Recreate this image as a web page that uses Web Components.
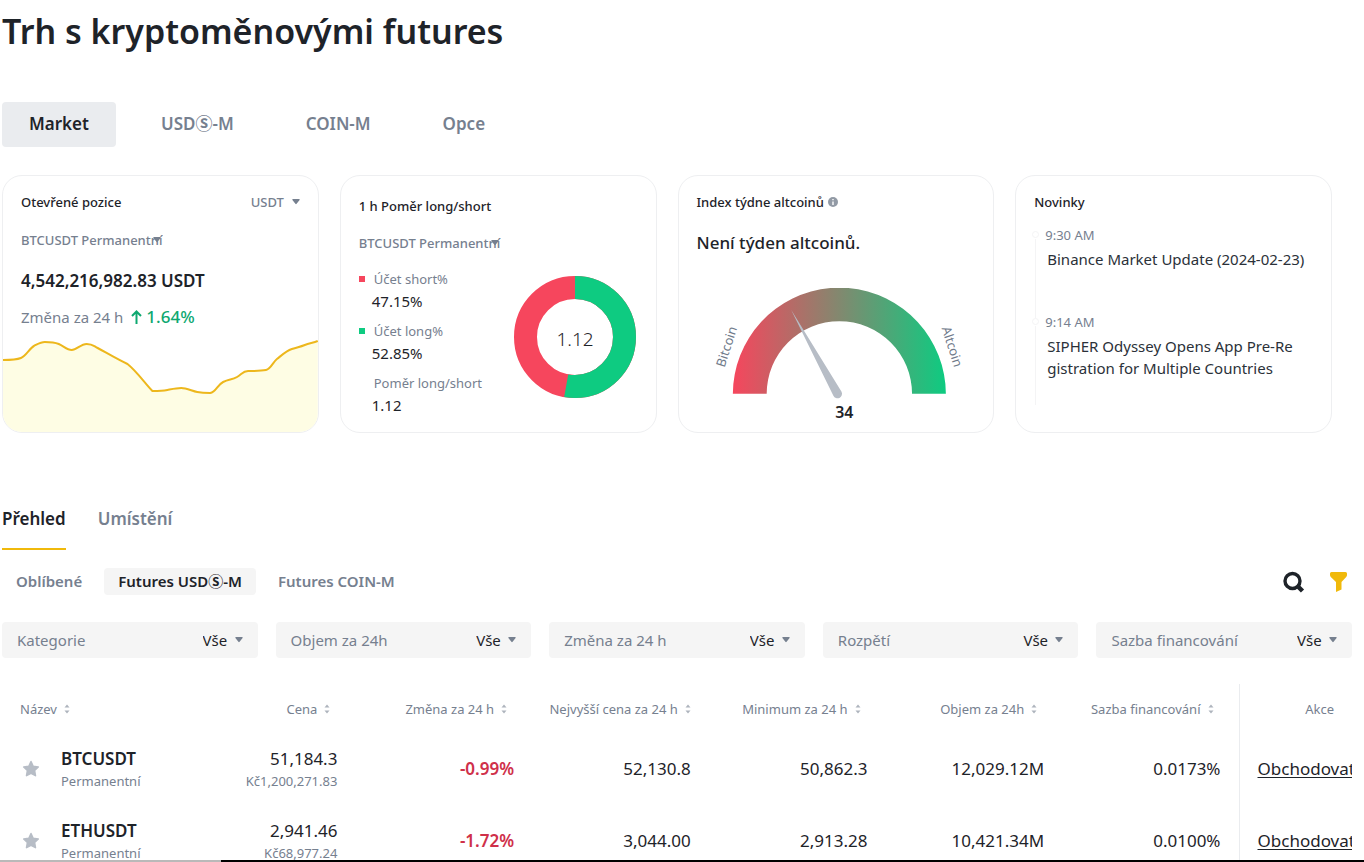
<!DOCTYPE html>
<html lang="cs">
<head>
<meta charset="utf-8">
<meta name="viewport" content="width=device-width, initial-scale=1">
<title>Trh s kryptoměnovými futures</title>
<style>
  html { scrollbar-width: none; }
  body { margin: 0; background: #fff; }
</style>
</head>
<body>
<futures-page></futures-page>

<script>
const BASE = `
  *, *::before, *::after { box-sizing: border-box; }
  :host { display: block; }
  :host([hidden]) { display: none; }
  button, select { font: inherit; color: inherit; background: none; border: 0; margin: 0; padding: 0; cursor: pointer; }
  select { appearance: none; -webkit-appearance: none; }
  svg { display: block; }
`;
const define = (name, css, html, setup) => {
  const template = document.createElement('template');
  template.innerHTML = `<style>${BASE}${css}</style>${html}`;
  customElements.define(name, class extends HTMLElement {
    connectedCallback() {
      if (this.shadowRoot) return;
      this.attachShadow({ mode: 'open' }).append(template.content.cloneNode(true));
      if (setup) setup(this, this.shadowRoot);
    }
  });
};

/* Row of tabs; attribute "kind" picks the look: pill, line or chip. */
define('tab-bar', `
  div { display: flex; }
  button { color: var(--muted); font-weight: 600; white-space: nowrap; }
  button[aria-selected=true] { color: var(--ink); }
  :host([kind=pill]) div { gap: 18px; }
  :host([kind=pill]) button { padding: 10px 27px 11px; line-height: 24px; font-size: 17px; border-radius: 4px; }
  :host([kind=pill]) button[aria-selected=true] { background: #eaecef; }
  :host([kind=line]) div { gap: 32px; }
  :host([kind=line]) button { padding-bottom: 17px; line-height: 24px; font-size: 17px; border-bottom: 2px solid transparent; }
  :host([kind=line]) button[aria-selected=true] { border-color: var(--gold); }
  :host([kind=chip]) div { gap: 8px; }
  :host([kind=chip]) button { padding: 3px 14px 4px; line-height: 20px; font-size: 15px; border-radius: 4px; }
  :host([kind=chip]) button[aria-selected=true] { background: var(--fill); }
`, `<div role="tablist"></div>`, (host, root) => {
  const list = root.querySelector('div');
  host.getAttribute('items').split('|').forEach((text, i) => {
    const b = document.createElement('button');
    b.type = 'button';
    b.setAttribute('role', 'tab');
    b.textContent = text;
    b.setAttribute('aria-selected', String(i === Number(host.getAttribute('selected') || 0)));
    b.onclick = () => list.querySelectorAll('button').forEach(o => o.setAttribute('aria-selected', String(o === b)));
    list.append(b);
  });
});

/* Drop-down with a small caret; "overlap" lets the caret lie over the text's end. */
define('pick-list', `
  :host { display: inline-block; }
  label { display: flex; align-items: center; justify-content: space-between; position: relative; }
  span:empty { display: none; }
  span { color: var(--muted); white-space: nowrap; }
  .box { position: relative; display: block; }
  select { display: block; padding-right: 15px; line-height: 20px; height: 20px; }
  svg { position: absolute; right: 0; top: 7px; width: 8px; height: 6px; fill: #76808f; pointer-events: none; }
  :host([overlap]) select { padding-right: 0; }
  :host([overlap]) svg { right: 2px; }
  :host([filter]) { display: block; background: var(--fill); border-radius: 4px; padding: 8px 15px; font-size: 15px; }
  :host([filter]) select { color: var(--ink); }
`, `<label><span></span><div class="box"><select><option></option></select>
    <svg viewBox="0 0 8 6" aria-hidden="true"><path d="M1 0h6q1.200 0 .6 1.100L4.600 4.800q-.6.8-1.200 0L.4 1.100Q-.2 0 1 0z"/></svg></div></label>`,
(host, root) => {
  root.querySelector('span').textContent = host.getAttribute('label') || '';
  root.querySelector('option').textContent = host.getAttribute('value');
  if (host.hasAttribute('name')) root.querySelector('select').setAttribute('aria-label', host.getAttribute('name'));
});

/* White rounded card with a heading row. */
define('market-card', `
  :host { position: relative; overflow: hidden; border: 1px solid #eeeff1; border-radius: 20px; padding: 16px 18px 8px; min-height: 258px; min-width: 0; font-size: 13px; line-height: 20px; }
  :host([low]) { padding-top: 20px; }
  header { display: flex; justify-content: space-between; }
  h2 { margin: 0; font-size: 13px; font-weight: 500; display: flex; align-items: center; gap: 4px; color: var(--ink); }
`, `<header><h2><slot name="title"></slot></h2><slot name="action"></slot></header><slot></slot>`);

define('open-interest', `
  pick-list { margin-top: 18px; color: var(--muted); font-weight: 500; vertical-align: top; }
  strong { display: block; margin-top: 19px; font-size: 17px; line-height: 24px; font-weight: 600; color: var(--ink); }
  p { margin: 14px 0 0; font-size: 15px; display: flex; align-items: center; gap: 8px; color: var(--muted); }
  b { display: flex; align-items: center; gap: 4px; font-size: 17px; font-weight: 500; color: #0ea870; }
  .chart { position: absolute; left: 0; bottom: 0; width: 100%; height: 98px; }
`, `<pick-list overlap name="Kontrakt" value="BTCUSDT Permanentní"></pick-list>
  <strong>4,542,216,982.83 USDT</strong>
  <p>Změna za 24 h <b><svg width="11" height="14" viewBox="0 0 11 14" fill="none" stroke="currentColor" stroke-width="2"><path d="M5.500 14V1.500M1 6l4.500-4.500L10 6"/></svg>1.64%</b></p>
  <svg class="chart" viewBox="0 335 316 98" preserveAspectRatio="none" aria-hidden="true">
    <path fill="#fefde4" d="M0 361C8 361 13 361 18 359S27 349 31 347S38 343 42 343S51 343 56 345S64 351 69 351S78 345 84 345S91 347 95 349C106 355 116 361 125 365C135 373 142 384 150 392C156 392 160 392 165 391S174 389 179 389S190 392 195 393S204 394 208 394C214 393 215 386 221 383S230 381 235 378S241 372 246 372S259 372 264 371S271 363 275 360S284 352 290 350S298 348 303 346S312 344 316 342V433H0z"/>
    <path fill="none" stroke="#edb71c" stroke-width="2" d="M0 361C8 361 13 361 18 359S27 349 31 347S38 343 42 343S51 343 56 345S64 351 69 351S78 345 84 345S91 347 95 349C106 355 116 361 125 365C135 373 142 384 150 392C156 392 160 392 165 391S174 389 179 389S190 392 195 393S204 394 208 394C214 393 215 386 221 383S230 381 235 378S241 372 246 372S259 372 264 371S271 363 275 360S284 352 290 350S298 348 303 346S312 344 316 342"/>
  </svg>`);

define('long-short', `
  pick-list { margin-top: 17px; color: var(--muted); font-weight: 500; vertical-align: top; }
  .body { display: flex; justify-content: space-between; align-items: flex-start; margin-top: 16px; }
  dl { margin: 0; display: grid; gap: 8px; }
  dt { color: var(--muted); display: flex; align-items: center; gap: 9px; white-space: nowrap; }
  dt::before { content: ""; width: 6px; height: 6px; background: var(--dot, transparent); }
  dd { margin: 0 0 0 13px; font-size: 15px; line-height: 24px; color: var(--ink); }
  figure { margin: 5px 0 0; flex: none; }
`, `<pick-list overlap name="Kontrakt" value="BTCUSDT Permanentní"></pick-list>
  <div class="body"><dl>
    <div><dt style="--dot:#f6465d">Účet short%</dt><dd>47.15%</dd></div>
    <div><dt style="--dot:#0ecb81">Účet long%</dt><dd>52.85%</dd></div>
    <div><dt>Poměr long/short</dt><dd>1.12</dd></div>
  </dl>
  <figure><svg width="126" height="126" viewBox="0 0 126 126">
    <g fill="none" stroke-width="23" transform="rotate(-90 63 63)">
      <circle cx="63" cy="63" r="49.500" stroke="#f6465d"/>
      <circle cx="63" cy="63" r="49.500" stroke="#0ecb81" pathLength="100" stroke-dasharray="52.850 47.150"/>
    </g>
    <text x="63" y="72" text-anchor="middle" font-size="19" fill="#1e2329" font-weight="300">1.12</text>
  </svg></figure></div>`);

define('altcoin-index', `
  strong { display: block; margin-top: 19px; font-size: 17px; line-height: 24px; font-weight: 500; color: var(--ink); }
  svg { width: 100%; height: 142px; margin-top: 25px; }
`, `<strong>Není týden altcoinů.</strong>
  <svg viewBox="696 280 280 142">
    <defs><linearGradient id="g" x1="0" x2="1"><stop offset="0" stop-color="#f6465d"/><stop offset="1" stop-color="#0ecb81"/></linearGradient></defs>
    <path fill="url(#g)" d="M732 394A107 107 0 0 1 830 287.800H848A107 107 0 0 1 946 394H912A73 73 0 0 0 766 394z"/>
    <path fill="#b7bdc6" d="M790.500 309.500L841.200 392A4.500 4.500 0 1 1 833 396z"/>
    <g font-size="13" text-anchor="middle" fill="#707a8a">
      <text transform="translate(730 348) rotate(-72)">Bitcoin</text>
      <text transform="translate(948 348) rotate(72)">Altcoin</text>
    </g>
    <text x="844" y="418" text-anchor="middle" font-size="16" font-weight="600" fill="#1e2329">34</text>
  </svg>`);

define('news-list', `
  ol { list-style: none; margin: 13px 0 0; padding: 0; }
  li { min-height: 87px; padding-left: 11px; position: relative; }
  li::before { content: ""; position: absolute; left: 1px; top: 14px; bottom: -6px; border-left: 1px solid #f4f4f5; }
  li::after { content: ""; position: absolute; left: -2px; top: 6px; width: 7px; height: 7px; border: 1px solid #f4f4f5; border-radius: 50%; }
  time { display: block; color: var(--muted); }
  a { display: block; margin: 3px 0 0 2px; font-size: 15px; line-height: 22px; color: #2b3139; text-decoration: none; }
`, `<ol><li><time>9:30 AM</time><a href="#n1">Binance Market Update (2024-02-23)</a></li>
  <li><time>9:14 AM</time><a href="#n2">SIPHER Odyssey Opens App Pre-Re<wbr>gistration for Multiple Countries</a></li></ol>`);

define('futures-table', `
  table { width: 100%; border-collapse: collapse; table-layout: fixed; }
  .last { width: 113px; }
  th { height: 49px; padding: 0 25px 0 0; text-align: right; font-size: 13px; font-weight: 400; color: var(--muted); white-space: nowrap; }
  th button { display: inline-flex; align-items: center; gap: 7px; }
  th:first-child { text-align: left; padding-left: 18px; }
  th:nth-child(4) { padding-right: 18px; }
  td { height: 72px; padding: 0 18px 0 0; text-align: right; font-size: 17px; color: var(--ink); white-space: nowrap; }
  th:last-child, td:last-child { border-left: 1px solid #eaecef; padding: 0 18px; }
  td:last-child { text-align: left; }
  td:first-child { padding: 0 0 0 20px; text-align: left; }
  .pair { display: flex; align-items: center; gap: 21px; font-weight: 600; }
  .down { color: #cf304a; font-weight: 600; }
  .two { display: block; line-height: 24px; }
  small { display: block; font-size: 13px; line-height: 20px; font-weight: 400; color: var(--muted); }
  a { color: inherit; text-underline-offset: 2px; text-decoration-thickness: 1px; }
  .sort { fill: #aeb4bd; }
`, `<table><colgroup><col span="7"><col class="last"></colgroup><thead><tr></tr></thead><tbody></tbody></table>`,
(host, root) => {
  const sort = '<svg class="sort" width="6" height="10" viewBox="0 0 6 10" aria-hidden="true"><path d="M3 .5L5.500 3.500H.5zM3 9.500L.5 6.500H5.500z"/></svg>';
  const star = '<svg width="18" height="18" viewBox="0 0 18 18" fill="#b7bdc6" stroke="#b7bdc6" stroke-linejoin="round" stroke-width="1.500"><path d="M9 1.500l2.200 4.700 5.100.7-3.700 3.600.9 5.200L9 13.300l-4.500 2.400.9-5.200L1.700 6.900l5.100-.7z"/></svg>';
  root.querySelector('thead tr').innerHTML =
    ['Název', 'Cena', 'Změna za 24 h', 'Nejvyšší cena za 24 h', 'Minimum za 24 h', 'Objem za 24h', 'Sazba financování']
      .map(t => `<th scope="col"><button type="button">${t} ${sort}</button></th>`).join('') + '<th scope="col">Akce</th>';
  root.querySelector('tbody').innerHTML = [
    ['BTCUSDT', '51,184.3', 'Kč1,200,271.83', '-0.99%', '52,130.8', '50,862.3', '12,029.12M', '0.0173%'],
    ['ETHUSDT', '2,941.46', 'Kč68,977.24', '-1.72%', '3,044.00', '2,913.28', '10,421.34M', '0.0100%']
  ].map(([n, p, k, c, ...rest]) => `<tr>
    <td><div class="pair"><button type="button" aria-label="Oblíbené">${star}</button><span class="two">${n}<small>Permanentní</small></span></div></td>
    <td><span class="two">${p}<small>${k}</small></span></td><td class="down">${c}</td>
    ${rest.map(v => `<td>${v}</td>`).join('')}<td><a href="#${n}">Obchodovat</a></td></tr>`).join('');
});

define('futures-page', `
  :host {
    --ink: #1e2329; --muted: #76808f; --gold: #f0b90b; --fill: #f5f5f5;
    font-family: "Noto Sans", "Noto Sans CJK JP", sans-serif; color: var(--ink); font-size: 15px; line-height: 20px;
  }
  main { margin: 0 12px 0 2px; padding-top: 9px; overflow: hidden; }
  h1 { margin: 0; font-size: 34px; line-height: 44px; font-weight: 600; }
  .markets { margin-top: 49px; }
  .cards { display: grid; grid-template-columns: repeat(4, minmax(0, 1fr)); gap: 21px; margin: 28px 20px 0 0; }
  .sections { margin-top: 74px; }
  .bar { display: flex; align-items: center; justify-content: space-between; margin-top: 18px; }
  .tools { display: flex; align-items: center; gap: 25px; padding-right: 5px; height: 27px; }
  .tools button { display: block; }
  .filters { display: grid; grid-template-columns: repeat(5, minmax(0, 1fr)); gap: 18px; margin: 27px 0 26px; }
  .unit { color: var(--muted); font-weight: 500; }
  .edge { position: fixed; inset: auto 0 0 0; height: 2px; display: grid; grid-template-columns: 221px 1fr; background: #000; }
  .edge::before { content: ""; background: #b9b9b9; }
`, `<main>
  <h1>Trh s kryptoměnovými futures</h1>
  <tab-bar class="markets" kind="pill" items="Market|USDⓈ-M|COIN-M|Opce"></tab-bar>
  <section class="cards">
    <market-card><span slot="title">Otevřené pozice</span><pick-list class="unit" slot="action" name="Jednotka" value="USDT"></pick-list><open-interest></open-interest></market-card>
    <market-card low><span slot="title">1 h Poměr long/short</span><long-short></long-short></market-card>
    <market-card><span slot="title">Index týdne altcoinů</span>
      <svg slot="title" width="10" height="10" viewBox="0 0 10 10" aria-hidden="true"><circle cx="5" cy="5" r="5" fill="#929aa5"/><path d="M5 4.500v3.500M5 2v1.300" stroke="#fff" stroke-width="1.400" fill="none"/></svg>
      <altcoin-index></altcoin-index></market-card>
    <market-card><span slot="title">Novinky</span><news-list></news-list></market-card>
  </section>
  <tab-bar class="sections" kind="line" items="Přehled|Umístění"></tab-bar>
  <div class="bar">
    <tab-bar kind="chip" selected="1" items="Oblíbené|Futures USDⓈ-M|Futures COIN-M"></tab-bar>
    <div class="tools">
      <button type="button" aria-label="Hledat"><svg width="22" height="22" viewBox="0 0 22 22" fill="none" stroke="#1e2329"><circle cx="9.500" cy="10" r="7.500" stroke-width="3.400"/><path d="M14 14.500l5.500 5.500" stroke-width="4.500"/></svg></button>
      <button type="button" aria-label="Filtr"><svg width="17" height="20" viewBox="0 0 17 20" fill="#f0b90b"><path d="M1.500 0h14Q17 0 17 1.500V3q0 1-.8 1.900L11.500 10v7.500L6 20V10L.8 4.900Q0 4 0 3V1.500Q0 0 1.500 0z"/></svg></button>
    </div>
  </div>
  <div class="filters">
    <pick-list filter label="Kategorie" value="Vše"></pick-list>
    <pick-list filter label="Objem za 24h" value="Vše"></pick-list>
    <pick-list filter label="Změna za 24 h" value="Vše"></pick-list>
    <pick-list filter label="Rozpětí" value="Vše"></pick-list>
    <pick-list filter label="Sazba financování" value="Vše"></pick-list>
  </div>
  <futures-table></futures-table>
</main>
<div class="edge" aria-hidden="true"></div>`);
</script>
</body>
</html>
